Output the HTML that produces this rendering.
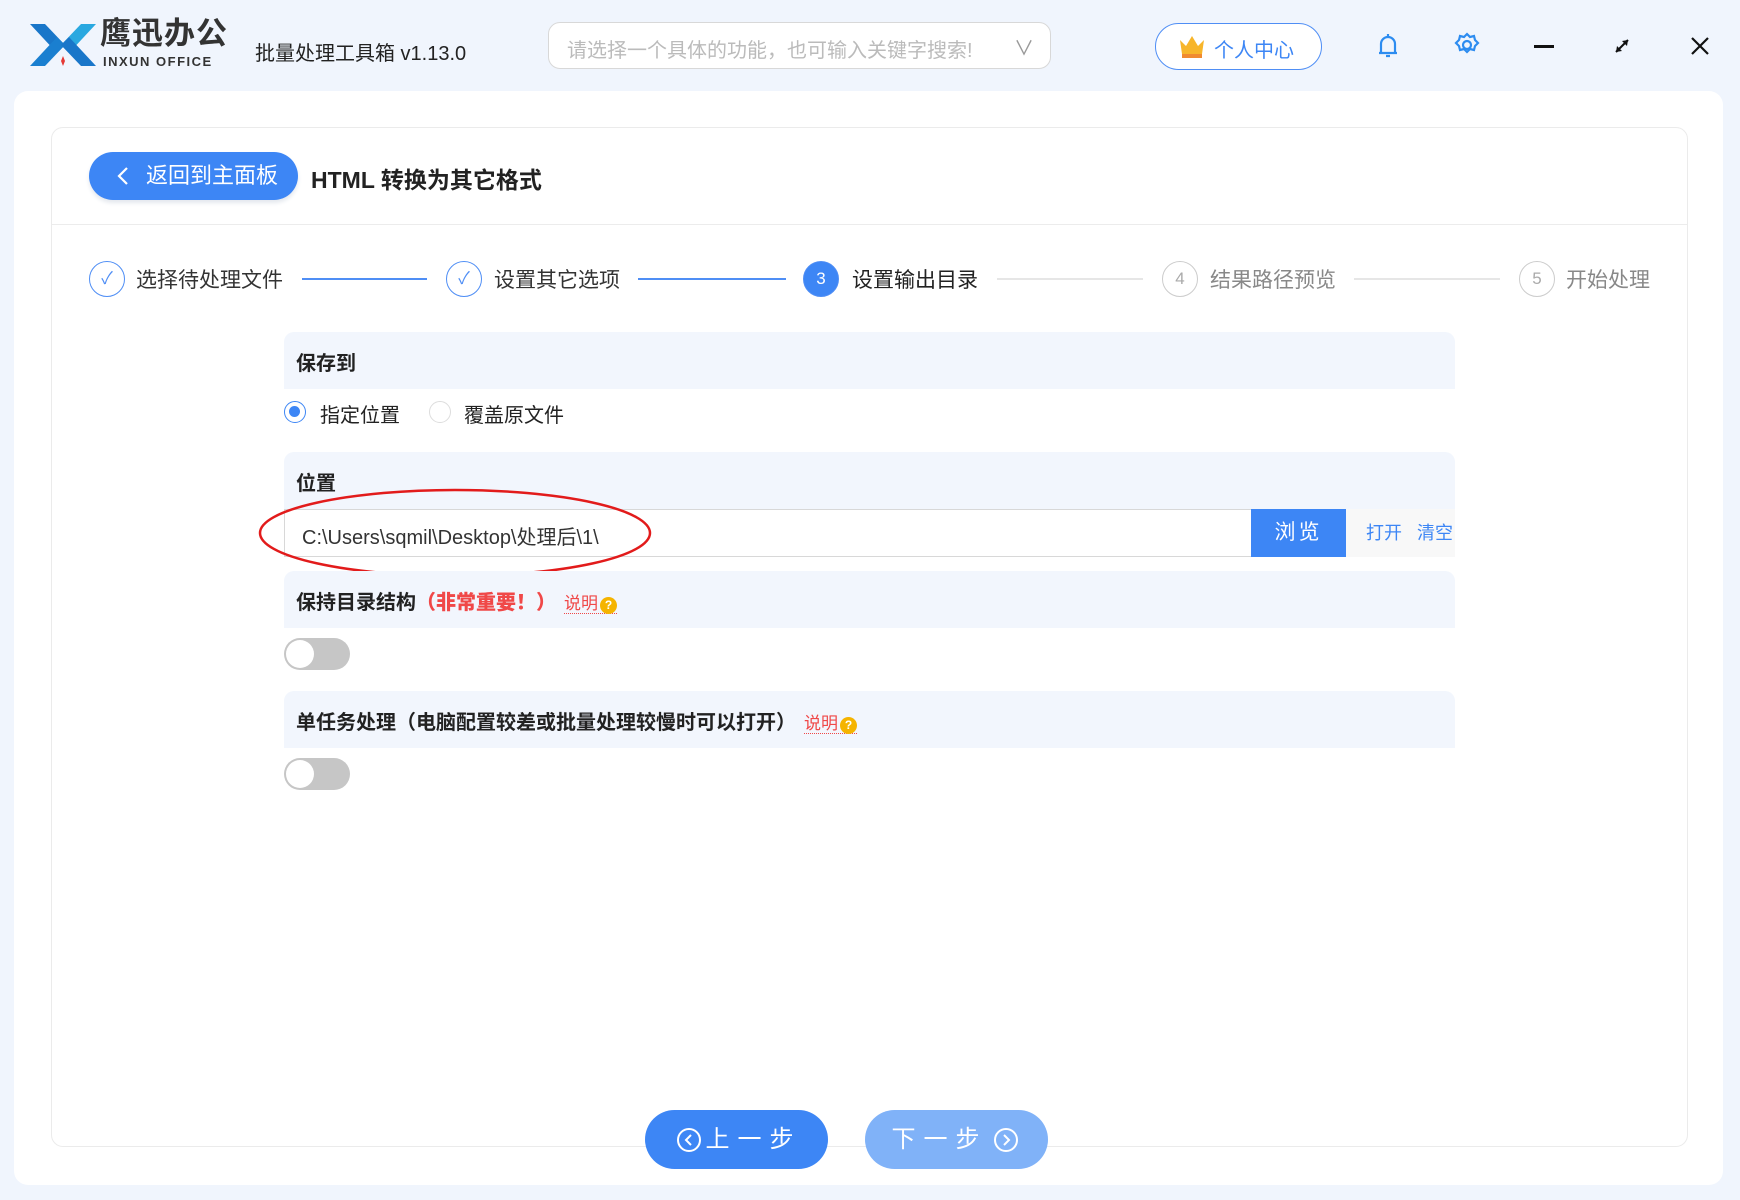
<!DOCTYPE html>
<html><head><meta charset="utf-8"><style>
*{box-sizing:border-box;margin:0;padding:0}
body{width:1740px;height:1200px;background:#f0f5fd;font-family:"Liberation Sans","Noto Sans CJK SC",sans-serif;position:relative;overflow:hidden;color:#222}
.abs{position:absolute}
.panel{left:14px;top:91px;width:1709px;height:1094px;background:#fff;border-radius:14px}
.card{left:51px;top:127px;width:1637px;height:1020px;border:1px solid #ebebeb;border-radius:12px;background:#fff}
.sec{left:284px;width:1171px;height:57px;background:#f2f6fd;border-radius:10px 10px 0 0}
.sec span{position:absolute;left:12px;top:15px;font-size:20px;font-weight:bold;color:#222}
.step{font-size:21px;color:#333;top:264px}
.circ{width:36px;height:36px;border-radius:50%;top:261px;border:1.5px solid #4f8ef5;text-align:center;line-height:33px;font-size:17px}
.line{height:1.5px;top:278px}
.tog{left:284px;width:66px;height:32px;border-radius:16px;background:#c6c6c6}
.tog:after{content:"";position:absolute;left:2px;top:2px;width:28px;height:28px;border-radius:50%;background:#fff}
.btn{height:59px;width:183px;border-radius:30px;color:#fff;font-size:24px;text-align:center;line-height:59px;letter-spacing:8px}
</style></head><body>
<!-- logo -->
<svg class="abs" style="left:28px;top:20px" width="70" height="50" viewBox="0 0 70 50">
<path d="M2 4h15l20 21-8 8z" fill="#1976c9"/><path d="M68 4H53L33 25l8 8z" fill="#29a8e0"/>
<path d="M2 46h15l20-21-8-8z" fill="#1a7fd0"/><path d="M68 46H53L33 25l8-8z" fill="#1976c9"/>
<path d="M35 36l2 5-2 5-2-5z" fill="#e53935"/></svg>
<div class="abs" style="left:100px;top:16px;font-size:31px;font-weight:bold;color:#333;letter-spacing:1px;line-height:36px">鹰迅办公</div>
<div class="abs" style="left:103px;top:54px;font-size:13px;font-weight:bold;color:#333;letter-spacing:1.5px;line-height:16px">INXUN OFFICE</div>
<div class="abs" style="left:255px;top:37px;font-size:20px;color:#222">批量处理工具箱 v1.13.0</div>
<div class="abs" style="left:548px;top:22px;width:503px;height:47px;border:1px solid #d8d8d8;border-radius:12px;background:#fff;font-size:20px;color:#bbb;padding:11px 18px">请选择一个具体的功能，也可输入关键字搜索!<span style="position:absolute;right:16px;top:9px;color:#999">∨</span></div>
<div class="abs" style="left:1155px;top:23px;width:167px;height:47px;border:1.5px solid #4f8ef5;border-radius:24px;background:#fff;font-size:20px;color:#3d86f5;padding:10px 0 0 58px">个人中心</div>
<svg class="abs" style="left:1178px;top:34px" width="28" height="26" viewBox="0 0 28 26"><path d="M2 6l6 6 6-10 6 10 6-6-2 14H4z" fill="#f7b52a"/><rect x="4" y="20" width="20" height="4" fill="#f08a30"/></svg>
<svg class="abs" style="left:1376px;top:32px" width="24" height="28" viewBox="0 0 24 28" fill="none" stroke="#2d8cf0" stroke-width="2.2"><path d="M12 2v2M5 21V12a7 7 0 0114 0v9zM3 21h18M10 24h4"/></svg>
<svg class="abs" style="left:1454px;top:32px" width="26" height="26" viewBox="0 0 26 26" fill="none" stroke="#2d8cf0" stroke-width="2.2"><path d="M13 2l3 3 4-1 1 4 3 3-3 3-1 4-4-1-3 3-3-3-4 1-1-4-3-3 3-3 1-4 4 1z"/><circle cx="13" cy="13" r="4"/></svg>
<div class="abs" style="left:1534px;top:45px;width:20px;height:2.5px;background:#111"></div>
<svg class="abs" style="left:1612px;top:36px" width="20" height="20" viewBox="0 0 20 20" stroke="#111" stroke-width="2" fill="#111"><path d="M4 16L16 4"/><path d="M16 4l-6 1 5 5z M4 16l6-1-5-5z" stroke="none"/></svg>
<svg class="abs" style="left:1690px;top:36px" width="20" height="20" viewBox="0 0 20 20" stroke="#111" stroke-width="2.2"><path d="M2 2l16 16M18 2L2 18"/></svg>

<div class="abs panel"></div>
<div class="abs card"></div>
<div class="abs" style="left:89px;top:152px;width:209px;height:48px;border-radius:24px;background:#3d86f5;color:#fff;font-size:22px;line-height:48px;padding-left:57px;box-shadow:0 3px 4px #e4e8ee">返回到主面板</div>
<svg class="abs" style="left:116px;top:165px" width="14" height="22" viewBox="0 0 14 22" fill="none" stroke="#fff" stroke-width="2.2"><path d="M11 3L3 11l8 8"/></svg>
<div class="abs" style="left:311px;top:161px;font-size:23px;font-weight:bold;color:#222">HTML 转换为其它格式</div>
<div class="abs" style="left:52px;top:224px;width:1635px;height:1px;background:#ececec"></div>

<div class="abs circ" style="left:89px;color:#4f8ef5">✓</div><div class="abs step" style="left:136px">选择待处理文件</div>
<div class="abs line" style="left:302px;width:125px;background:#4f8ef5"></div>
<div class="abs circ" style="left:446px;color:#4f8ef5">✓</div><div class="abs step" style="left:494px">设置其它选项</div>
<div class="abs line" style="left:638px;width:148px;background:#4f8ef5"></div>
<div class="abs circ" style="left:803px;background:#3d86f5;color:#fff">3</div><div class="abs step" style="left:852px;color:#222">设置输出目录</div>
<div class="abs line" style="left:997px;width:146px;background:#e6e6e6"></div>
<div class="abs circ" style="left:1162px;border-color:#ccc;color:#aaa">4</div><div class="abs step" style="left:1210px;color:#888">结果路径预览</div>
<div class="abs line" style="left:1354px;width:146px;background:#e6e6e6"></div>
<div class="abs circ" style="left:1519px;border-color:#ccc;color:#aaa">5</div><div class="abs step" style="left:1566px;color:#888">开始处理</div>

<div class="abs sec" style="top:332px"><span>保存到</span></div>
<div class="abs" style="left:284px;top:401px;width:22px;height:22px;border-radius:50%;border:1.5px solid #3d86f5"><div style="margin:4px;width:11px;height:11px;border-radius:50%;background:#3d86f5"></div></div>
<div class="abs" style="left:320px;top:399px;font-size:20px">指定位置</div>
<div class="abs" style="left:429px;top:401px;width:22px;height:22px;border-radius:50%;border:1.5px solid #ddd"></div>
<div class="abs" style="left:464px;top:399px;font-size:20px">覆盖原文件</div>

<div class="abs sec" style="top:452px"><span>位置</span></div>
<div class="abs" style="left:284px;top:509px;width:968px;height:48px;border:1px solid #d8d8d8;background:#fff;font-size:20px;padding:11px 17px;color:#333">C:\Users\sqmil\Desktop\处理后\1\</div>
<div class="abs" style="left:1251px;top:509px;width:95px;height:48px;background:#3d86f5;color:#fff;font-size:21px;text-align:center;line-height:48px;letter-spacing:3px">浏览</div>
<div class="abs" style="left:1346px;top:509px;width:109px;height:48px;background:#f8f8f8;color:#3d86f5;font-size:18px;line-height:48px;padding-left:20px;word-spacing:10px">打开 清空</div>
<svg class="abs" style="left:255px;top:486px" width="400" height="94"><ellipse cx="200" cy="47" rx="195" ry="43" fill="none" stroke="#e21b1b" stroke-width="2.5"/></svg>

<div class="abs sec" style="top:571px"><span>保持目录结构<b style="color:#f04848">（非常重要！）</b><i style="font-style:normal;font-weight:normal;font-size:17px;color:#f04848;border-bottom:1.5px dotted #f04848;margin-left:8px">说明<b style="display:inline-block;width:17px;height:17px;border-radius:50%;background:#f5b400;color:#fff;font-size:12px;text-align:center;line-height:17px;margin-left:2px">?</b></i></span></div>
<div class="abs tog" style="top:638px"></div>
<div class="abs sec" style="top:691px"><span>单任务处理（电脑配置较差或批量处理较慢时可以打开）<i style="font-style:normal;font-weight:normal;font-size:17px;color:#f04848;border-bottom:1.5px dotted #f04848;margin-left:8px">说明<b style="display:inline-block;width:17px;height:17px;border-radius:50%;background:#f5b400;color:#fff;font-size:12px;text-align:center;line-height:17px;margin-left:2px">?</b></i></span></div>
<div class="abs tog" style="top:758px"></div>

<div class="abs btn" style="left:645px;top:1110px;background:#3d86f5;padding-left:34px">上一步</div>
<svg class="abs" style="left:676px;top:1127px" width="26" height="26" viewBox="0 0 26 26" fill="none" stroke="#fff" stroke-width="2"><circle cx="13" cy="13" r="11"/><path d="M15 8l-5 5 5 5"/></svg>
<div class="abs btn" style="left:865px;top:1110px;background:#80b2f8;padding-right:34px">下一步</div>
<svg class="abs" style="left:993px;top:1127px" width="26" height="26" viewBox="0 0 26 26" fill="none" stroke="#fff" stroke-width="2"><circle cx="13" cy="13" r="11"/><path d="M11 8l5 5-5 5"/></svg>
</body></html>
